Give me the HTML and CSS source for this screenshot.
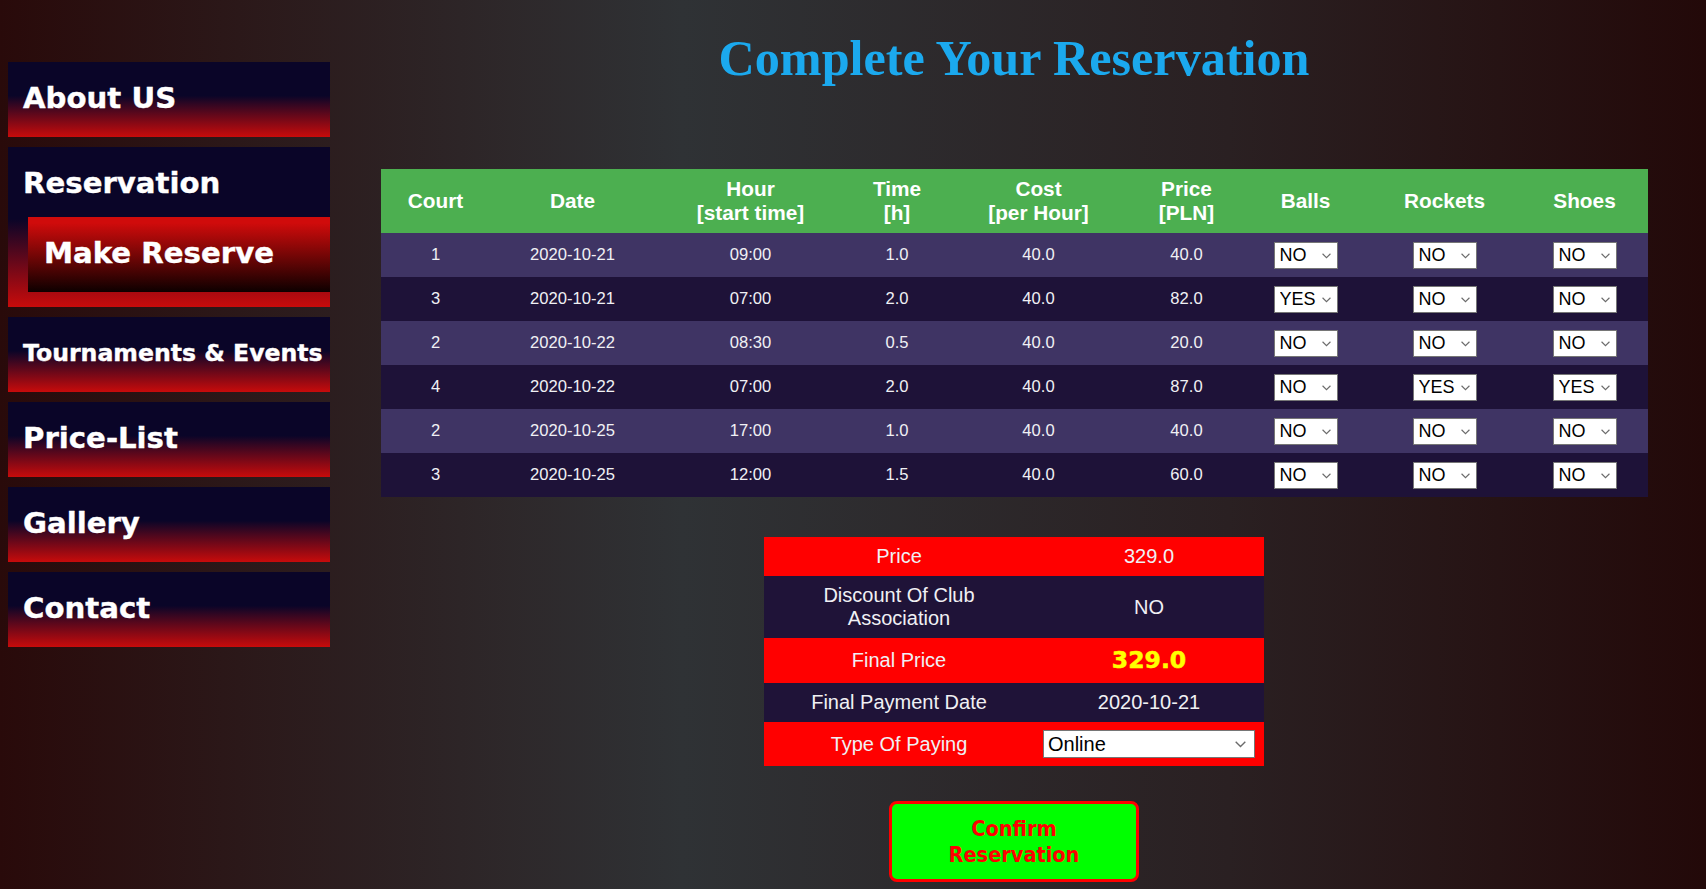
FILE: index.html
```html
<!DOCTYPE html>
<html lang="en">
<head>
<meta charset="utf-8">
<title>Complete Your Reservation</title>
<link rel="stylesheet" href="styles.css">
</head>
<body>
<div class="page">
  <nav class="sidebar">
    <a class="nav-item" href="#">About US</a>
    <div class="nav-item nav-group">
      <div class="nav-title">Reservation</div>
      <a class="nav-sub" href="#">Make Reserve</a>
    </div>
    <a class="nav-item nav-small" href="#">Tournaments &amp; Events</a>
    <a class="nav-item" href="#">Price-List</a>
    <a class="nav-item" href="#">Gallery</a>
    <a class="nav-item" href="#">Contact</a>
  </nav>

  <main class="main">
    <h1 class="title">Complete Your Reservation</h1>

    <table class="res-table">
      <colgroup>
        <col class="c-court"><col class="c-date"><col class="c-hour"><col class="c-time"><col class="c-cost"><col class="c-price"><col class="c-balls"><col class="c-rockets"><col class="c-shoes">
      </colgroup>
      <thead>
        <tr>
          <th>Court</th><th>Date</th><th>Hour<br>[start time]</th><th>Time<br>[h]</th><th>Cost<br>[per Hour]</th><th>Price<br>[PLN]</th><th>Balls</th><th>Rockets</th><th>Shoes</th>
        </tr>
      </thead>
      <tbody>
        <tr>
          <td>1</td><td>2020-10-21</td><td>09:00</td><td>1.0</td><td>40.0</td><td>40.0</td>
          <td><span class="sel"><select class="yn"><option selected>NO</option><option>YES</option></select><svg class="chev" viewBox="0 0 8 5"><path d="M0.5 0.5 L4 4 L7.5 0.5"/></svg></span></td>
          <td><span class="sel"><select class="yn"><option selected>NO</option><option>YES</option></select><svg class="chev" viewBox="0 0 8 5"><path d="M0.5 0.5 L4 4 L7.5 0.5"/></svg></span></td>
          <td><span class="sel"><select class="yn"><option selected>NO</option><option>YES</option></select><svg class="chev" viewBox="0 0 8 5"><path d="M0.5 0.5 L4 4 L7.5 0.5"/></svg></span></td>
        </tr>
        <tr>
          <td>3</td><td>2020-10-21</td><td>07:00</td><td>2.0</td><td>40.0</td><td>82.0</td>
          <td><span class="sel"><select class="yn"><option>NO</option><option selected>YES</option></select><svg class="chev" viewBox="0 0 8 5"><path d="M0.5 0.5 L4 4 L7.5 0.5"/></svg></span></td>
          <td><span class="sel"><select class="yn"><option selected>NO</option><option>YES</option></select><svg class="chev" viewBox="0 0 8 5"><path d="M0.5 0.5 L4 4 L7.5 0.5"/></svg></span></td>
          <td><span class="sel"><select class="yn"><option selected>NO</option><option>YES</option></select><svg class="chev" viewBox="0 0 8 5"><path d="M0.5 0.5 L4 4 L7.5 0.5"/></svg></span></td>
        </tr>
        <tr>
          <td>2</td><td>2020-10-22</td><td>08:30</td><td>0.5</td><td>40.0</td><td>20.0</td>
          <td><span class="sel"><select class="yn"><option selected>NO</option><option>YES</option></select><svg class="chev" viewBox="0 0 8 5"><path d="M0.5 0.5 L4 4 L7.5 0.5"/></svg></span></td>
          <td><span class="sel"><select class="yn"><option selected>NO</option><option>YES</option></select><svg class="chev" viewBox="0 0 8 5"><path d="M0.5 0.5 L4 4 L7.5 0.5"/></svg></span></td>
          <td><span class="sel"><select class="yn"><option selected>NO</option><option>YES</option></select><svg class="chev" viewBox="0 0 8 5"><path d="M0.5 0.5 L4 4 L7.5 0.5"/></svg></span></td>
        </tr>
        <tr>
          <td>4</td><td>2020-10-22</td><td>07:00</td><td>2.0</td><td>40.0</td><td>87.0</td>
          <td><span class="sel"><select class="yn"><option selected>NO</option><option>YES</option></select><svg class="chev" viewBox="0 0 8 5"><path d="M0.5 0.5 L4 4 L7.5 0.5"/></svg></span></td>
          <td><span class="sel"><select class="yn"><option>NO</option><option selected>YES</option></select><svg class="chev" viewBox="0 0 8 5"><path d="M0.5 0.5 L4 4 L7.5 0.5"/></svg></span></td>
          <td><span class="sel"><select class="yn"><option>NO</option><option selected>YES</option></select><svg class="chev" viewBox="0 0 8 5"><path d="M0.5 0.5 L4 4 L7.5 0.5"/></svg></span></td>
        </tr>
        <tr>
          <td>2</td><td>2020-10-25</td><td>17:00</td><td>1.0</td><td>40.0</td><td>40.0</td>
          <td><span class="sel"><select class="yn"><option selected>NO</option><option>YES</option></select><svg class="chev" viewBox="0 0 8 5"><path d="M0.5 0.5 L4 4 L7.5 0.5"/></svg></span></td>
          <td><span class="sel"><select class="yn"><option selected>NO</option><option>YES</option></select><svg class="chev" viewBox="0 0 8 5"><path d="M0.5 0.5 L4 4 L7.5 0.5"/></svg></span></td>
          <td><span class="sel"><select class="yn"><option selected>NO</option><option>YES</option></select><svg class="chev" viewBox="0 0 8 5"><path d="M0.5 0.5 L4 4 L7.5 0.5"/></svg></span></td>
        </tr>
        <tr>
          <td>3</td><td>2020-10-25</td><td>12:00</td><td>1.5</td><td>40.0</td><td>60.0</td>
          <td><span class="sel"><select class="yn"><option selected>NO</option><option>YES</option></select><svg class="chev" viewBox="0 0 8 5"><path d="M0.5 0.5 L4 4 L7.5 0.5"/></svg></span></td>
          <td><span class="sel"><select class="yn"><option selected>NO</option><option>YES</option></select><svg class="chev" viewBox="0 0 8 5"><path d="M0.5 0.5 L4 4 L7.5 0.5"/></svg></span></td>
          <td><span class="sel"><select class="yn"><option selected>NO</option><option>YES</option></select><svg class="chev" viewBox="0 0 8 5"><path d="M0.5 0.5 L4 4 L7.5 0.5"/></svg></span></td>
        </tr>
      </tbody>
    </table>

    <table class="summary">
      <colgroup><col class="s-label"><col class="s-value"></colgroup>
      <tbody>
        <tr class="s-red"><td>Price</td><td>329.0</td></tr>
        <tr class="s-dark"><td>Discount Of Club Association</td><td>NO</td></tr>
        <tr class="s-red"><td>Final Price</td><td class="final">329.0</td></tr>
        <tr class="s-dark"><td>Final Payment Date</td><td>2020-10-21</td></tr>
        <tr class="s-red"><td>Type Of Paying</td><td><span class="sel sel-pay"><select class="pay"><option selected>Online</option><option>Cash</option></select><svg class="chev chev-pay" viewBox="0 0 8 5"><path d="M0.5 0.5 L4 4 L7.5 0.5"/></svg></span></td></tr>
      </tbody>
    </table>

    <button class="confirm" type="button">Confirm<br>Reservation</button>
  </main>
</div>
</body>
</html>
```

FILE: styles.css
```css
html {
  min-height: 100%;
}

body {
  margin: 0;
  min-height: 889px;
  background: linear-gradient(90deg, #290a0a 0%, #2f3235 40%, #2a2022 72%, #230909 100%);
}

.page {
  display: flex;
  padding: 0 8px;
}

/* ---------- sidebar ---------- */
.sidebar {
  width: 322px;
  flex: none;
  padding-top: 62px;
  display: flex;
  flex-direction: column;
  gap: 10px;
}

.nav-item {
  display: block;
  height: 75px;
  box-sizing: border-box;
  padding: 19px 0 0 15px;
  background: linear-gradient(180deg, #0a0528 45%, #c80b0b 100%);
  color: #fff;
  font-family: "DejaVu Sans", sans-serif;
  font-weight: bold;
  font-size: 29.2px;
  line-height: 34px;
  text-decoration: none;
  white-space: nowrap;
  -webkit-text-stroke: 0.4px #fff;
}

.nav-small {
  font-size: 23.6px;
}

.nav-group {
  height: 160px;
}

.nav-sub {
  display: block;
  height: 75px;
  box-sizing: border-box;
  margin: 17px 0 0 5px;
  padding: 19px 0 0 16px;
  background: linear-gradient(180deg, #d00b0b 8%, #0d0000 100%);
  color: #fff;
  text-decoration: none;
}

/* ---------- main ---------- */
.main {
  flex: 1;
  display: flex;
  flex-direction: column;
  align-items: center;
  padding-top: 31px;
}

.title {
  margin: 0 0 84px;
  font-family: "Liberation Serif", "Times New Roman", serif;
  font-weight: bold;
  font-size: 50.2px;
  line-height: 54px;
  color: #1ba9ee;
}

.res-table {
  width: 1267px;
  border-collapse: collapse;
  border-spacing: 0;
  table-layout: fixed;
  font-family: "Liberation Sans", Arial, sans-serif;
}

.c-court { width: 110px; }
.c-date { width: 164px; }
.c-hour { width: 192px; }
.c-time { width: 101px; }
.c-cost { width: 182px; }
.c-price { width: 114px; }
.c-balls { width: 124px; }
.c-rockets { width: 154px; }
.c-shoes { width: 126px; }

.res-table thead tr {
  height: 64px;
}

.res-table th {
  padding: 0;
  background: #4caf50;
  color: #fff;
  font-weight: bold;
  font-size: 20.8px;
  line-height: 24px;
  text-align: center;
  vertical-align: middle;
}

.res-table tbody tr {
  height: 44px;
}

.res-table tbody tr:nth-child(odd) {
  background: #3f3464;
}

.res-table tbody tr:nth-child(even) {
  background: #1e1238;
}

.res-table td {
  padding: 0;
  color: #f0f0f4;
  font-size: 16.6px;
  text-align: center;
  vertical-align: middle;
}

/* selects with a thin chevron drawn over them */
.sel {
  position: relative;
  display: inline-block;
  vertical-align: middle;
  line-height: 0;
}

.yn {
  -webkit-appearance: none;
  appearance: none;
  width: 64px;
  height: 27px;
  box-sizing: border-box;
  margin: 0;
  padding: 0 0 0 5px;
  border: 1px solid #767676;
  border-radius: 0;
  background: #fff;
  color: #000;
  font-family: "Liberation Sans", Arial, sans-serif;
  font-size: 18px;
  line-height: 25px;
}

.chev {
  position: absolute;
  right: 7px;
  top: 11px;
  width: 9px;
  height: 6px;
  fill: none;
  stroke: #6b6b6b;
  stroke-width: 1;
  pointer-events: none;
}

.sel-pay {
  display: block;
}

.chev-pay {
  right: 9px;
  top: 11px;
  width: 11px;
  height: 7px;
}

/* ---------- summary ---------- */
.summary {
  margin-top: 40px;
  width: 500px;
  border-collapse: collapse;
  border-spacing: 0;
  table-layout: fixed;
  font-family: "Liberation Sans", Arial, sans-serif;
}

.s-label { width: 270px; }
.s-value { width: 230px; }

.summary td {
  padding: 8px 9px;
  color: #f0f0f4;
  font-size: 20px;
  line-height: 23px;
  text-align: center;
  vertical-align: middle;
}

.s-red td {
  background: #ff0000;
}

.s-dark td {
  background: #1f1338;
}

.summary td.final {
  color: #ffff00;
  font-family: "DejaVu Sans", sans-serif;
  font-weight: bold;
  font-size: 23.5px;
  line-height: 29px;
  -webkit-text-stroke: 0.5px #ffff00;
}

.pay {
  -webkit-appearance: none;
  appearance: none;
  display: block;
  width: 212px;
  height: 28px;
  box-sizing: border-box;
  margin: 0;
  padding: 0 0 0 4px;
  border: 1px solid #767676;
  border-radius: 0;
  background: #fff;
  color: #000;
  font-family: "Liberation Sans", Arial, sans-serif;
  font-size: 20px;
  line-height: 26px;
}

/* ---------- button ---------- */
.confirm {
  margin-top: 35px;
  width: 250px;
  height: 81px;
  box-sizing: border-box;
  padding: 0;
  border: 3px solid #ff0000;
  border-radius: 8px;
  background: #00ff00;
  color: #ff0000;
  font-family: "DejaVu Sans Condensed", "DejaVu Sans", sans-serif;
  font-weight: bold;
  font-size: 21.5px;
  line-height: 26px;
  cursor: pointer;
}
```
